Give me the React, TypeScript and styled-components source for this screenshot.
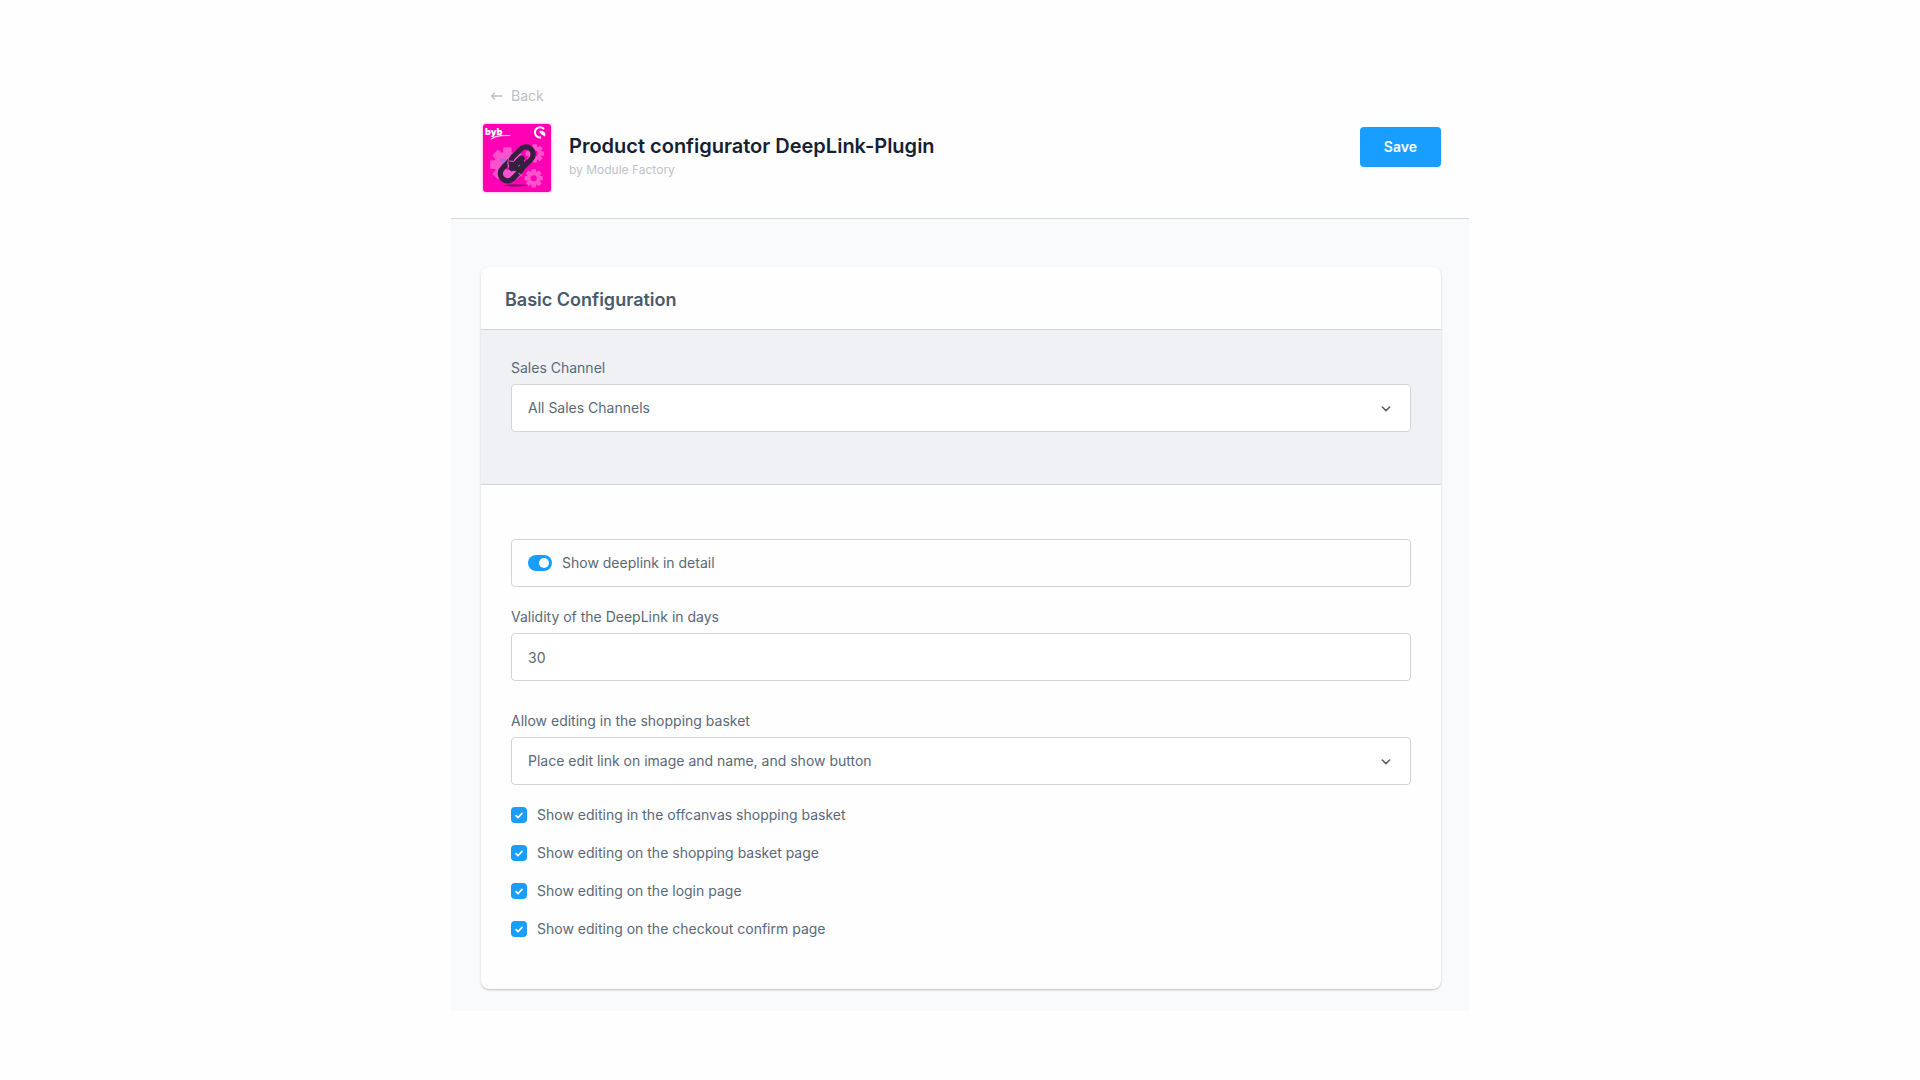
import React from "react";
import styled, { createGlobalStyle } from "styled-components";

const GlobalStyle = createGlobalStyle`
  *, *::before, *::after { box-sizing: border-box; }
  body {
    margin: 0;
    background: #fefefe;
    color: #5a6978;
    font: 400 14px/20px Inter, "Liberation Sans", sans-serif;
  }
`;

const Page = styled.div`
  max-width: 1018px;
  margin: 0 auto;
  padding-top: 84px;
`;

const Header = styled.header`
  padding: 0 28px 26px 32px;
  border-bottom: 1px solid #d1d9e0;
`;

const BackLink = styled.a`
  display: inline-flex;
  align-items: center;
  gap: 8px;
  padding-left: 7px;
  line-height: 24px;
  color: #b9c2cc;
  text-decoration: none;
  svg { display: block; }
`;

const HeaderRow = styled.div`
  display: flex;
  align-items: flex-start;
  margin-top: 16px;
`;

const PluginIcon = styled.svg`
  display: block;
  flex: none;
  width: 68px;
  height: 68px;
  border-radius: 3px;
  box-shadow: 0 0 3px rgba(255, 0, 180, 0.45);
`;

const Heading = styled.div`
  flex: 1;
  padding: 8px 0 0 18px;
`;

const Title = styled.h1`
  margin: 0;
  color: #142233;
  font-size: 20px;
  line-height: 28px;
  font-weight: 600;
`;

const Author = styled.p`
  margin: 0;
  color: #bcc3cb;
  font-size: 12px;
  line-height: 20px;
`;

const SaveButton = styled.button`
  height: 40px;
  margin-top: 3px;
  padding: 0 24px;
  border: 0;
  border-radius: 4px;
  background: #189eff;
  color: #fff;
  font: inherit;
  font-weight: 600;
  cursor: pointer;
`;

const Content = styled.main`
  padding: 48px 28px 22px 30px;
  background: #f9fafc;
`;

const Card = styled.section`
  overflow: hidden;
  border-radius: 8px;
  background: #fefefe;
  box-shadow: 0 1px 1px rgba(0, 0, 0, 0.12), 0 1px 3px rgba(0, 0, 0, 0.12);
`;

const CardTitle = styled.h2`
  margin: 0;
  padding: 21px 24px 17px;
  color: #485a6c;
  font-size: 18px;
  line-height: 24px;
  font-weight: 600;
`;

const ChannelArea = styled.div`
  padding: 28px 30px 52px;
  border: solid #d1d5da;
  border-width: 1px 0;
  background: #f0f1f5;
`;

const Form = styled.form`
  display: flex;
  flex-direction: column;
  padding: 54px 30px 50px;
`;

const Field = styled.div<{ $gap?: number }>`
  margin-top: ${(p) => p.$gap ?? 0}px;
`;

const Label = styled.label`
  display: block;
  margin-bottom: 6px;
`;

const Input = styled.input`
  display: block;
  width: 100%;
  height: 48px;
  padding: 0 16px;
  border: 1px solid #d1d5da;
  border-radius: 4px;
  outline: none;
  background: #fff;
  color: inherit;
  font: inherit;
`;

const SelectWrap = styled.div`
  display: grid;
  align-items: center;
  > * { grid-area: 1 / 1; }
  svg {
    justify-self: end;
    margin: 2px 20px 0 0;
    pointer-events: none;
  }
`;

const SelectBox = styled.select`
  appearance: none;
  width: 100%;
  height: 48px;
  padding: 0 48px 0 16px;
  border: 1px solid #d1d5da;
  border-radius: 4px;
  outline: none;
  background: #fff;
  color: inherit;
  font: inherit;
`;

const SwitchField = styled.label`
  display: flex;
  align-items: center;
  gap: 10px;
  height: 48px;
  padding: 0 16px;
  border: 1px solid #d1d5da;
  border-radius: 4px;
`;

const Switch = styled.input`
  appearance: none;
  display: flex;
  width: 24px;
  height: 16px;
  margin: 0;
  padding: 3px;
  border-radius: 8px;
  background: #b3bfcc;
  &::before {
    content: "";
    width: 10px;
    height: 10px;
    border-radius: 50%;
    background: #fff;
  }
  &:checked {
    justify-content: flex-end;
    background: #189eff;
  }
`;

const CheckList = styled.div`
  display: flex;
  flex-direction: column;
  gap: 18px;
  margin-top: 20px;
`;

const CheckRow = styled.label`
  display: flex;
  align-items: center;
  gap: 10px;
`;

const CheckMark = styled.span`
  display: grid;
  place-items: center;
  > * { grid-area: 1 / 1; }
  svg { pointer-events: none; }
`;

const CheckBox = styled.input`
  appearance: none;
  width: 16px;
  height: 16px;
  margin: 0;
  border-radius: 4px;
  background: #d1d9e0;
  &:checked { background: #189eff; }
`;

function Select({ id, value }: { id: string; value: string }) {
  return (
    <SelectWrap>
      <SelectBox id={id}>
        <option>{value}</option>
      </SelectBox>
      <svg width="10" height="6" viewBox="0 0 10 6" fill="none" stroke="#5b6470" strokeWidth="1.6" strokeLinecap="round" strokeLinejoin="round">
        <path d="M1.3 1 5 4.6 8.7 1" />
      </svg>
    </SelectWrap>
  );
}

function Gear({ x, y, r, hole }: { x: number; y: number; r: number; hole: number }) {
  const tooth = r * 0.5;
  return (
    <g transform={`translate(${x} ${y})`}>
      <circle r={(r * 0.76 + hole) / 2} fill="none" stroke="#ff52cc" strokeWidth={r * 0.76 - hole} />
      {[0, 45, 90, 135, 180, 225, 270, 315].map((a) => (
        <rect key={a} x={-tooth / 2} y={-r} width={tooth} height={r * 0.36} rx={r * 0.08} fill="#ff52cc" transform={`rotate(${a})`} />
      ))}
    </g>
  );
}

function DeepLinkIcon() {
  return (
    <PluginIcon viewBox="0 0 67 67" role="img" aria-label="DeepLink plugin">
      <rect width="67" height="67" fill="#ff00b4" />
      <Gear x={24} y={40} r={17} hole={5} />
      <Gear x={51} y={29} r={9} hole={3} />
      <Gear x={50} y={53.5} r={9} hole={3} />
      <path d="M15 34h9l3 3-7 3z" fill="#b568dc" />
      <ellipse cx="32" cy="60.500" rx="12" ry="1" fill="#74104f" />
      <g fill="none" stroke="#35203f" strokeWidth="5.200">
        <rect x="-12.500" y="-7.200" width="25" height="14.400" rx="7.200" transform="translate(28 45) rotate(-45)" />
        <path d="M33.500 29.500 29 34a7 7 0 0 0 0 9" stroke="#ff52cc" strokeWidth="7" />
        <rect x="-12.500" y="-7.200" width="25" height="14.400" rx="7.200" transform="translate(38.500 33.500) rotate(-45)" />
        <path d="m28.500 43.500 9.500-9.500" strokeWidth="6" strokeLinecap="round" />
      </g>
      <path d="m35 48.500 3.500 3M25.500 36.500l5 .5" stroke="#e85bc2" strokeWidth="1" />
      <text x="2" y="11" fill="#fff" fontFamily="Inter, sans-serif" fontSize="9" fontWeight="900">byb</text>
      <path d="M8 15c3-3 9-4.500 19-3.500-9-.3-14 .7-19 3.500z" fill="#fff" stroke="#fff" strokeWidth=".5" />
      <path d="M60 5A5 5 0 0 0 51.200 8.300A5 5 0 0 0 57.300 13.200" fill="none" stroke="#fff" strokeWidth="2" />
      <path d="M55.500 6.800c3-.6 6 .8 6 3.600 0 .8-.3 1.500-.8 2-.9-2-4.800-2.200-5.200-5.600z" fill="#fff" />
    </PluginIcon>
  );
}

const editingOptions = [
  "Show editing in the offcanvas shopping basket",
  "Show editing on the shopping basket page",
  "Show editing on the login page",
  "Show editing on the checkout confirm page",
];

export default function App() {
  return (
    <>
      <GlobalStyle />
      <Page>
        <Header>
          <BackLink href="#back">
            <svg width="13" height="10" viewBox="0 0 13 10" fill="none" stroke="currentColor" strokeWidth="1.3" strokeLinecap="round" strokeLinejoin="round">
              <path d="M12 5H1.500M4.500 2l-3 3 3 3" />
            </svg>
            Back
          </BackLink>
          <HeaderRow>
            <DeepLinkIcon />
            <Heading>
              <Title>Product configurator DeepLink-Plugin</Title>
              <Author>by Module Factory</Author>
            </Heading>
            <SaveButton type="submit" form="configuration">Save</SaveButton>
          </HeaderRow>
        </Header>
        <Content>
          <Card>
            <CardTitle>Basic Configuration</CardTitle>
            <ChannelArea>
              <Label htmlFor="channel">Sales Channel</Label>
              <Select id="channel" value="All Sales Channels" />
            </ChannelArea>
            <Form id="configuration" onSubmit={(e) => e.preventDefault()}>
              <SwitchField>
                <Switch type="checkbox" role="switch" defaultChecked />
                Show deeplink in detail
              </SwitchField>
              <Field $gap={20}>
                <Label htmlFor="validity">Validity of the DeepLink in days</Label>
                <Input id="validity" type="text" inputMode="numeric" defaultValue="30" />
              </Field>
              <Field $gap={30}>
                <Label htmlFor="editing">Allow editing in the shopping basket</Label>
                <Select id="editing" value="Place edit link on image and name, and show button" />
              </Field>
              <CheckList>
                {editingOptions.map((text) => (
                  <CheckRow key={text}>
                    <CheckMark>
                      <CheckBox type="checkbox" defaultChecked />
                      <svg width="8" height="7" viewBox="0 0 8 7" fill="none" stroke="#fff" strokeWidth="1.6" strokeLinecap="round" strokeLinejoin="round">
                        <path d="m1 3.600 2 2L7 1.400" />
                      </svg>
                    </CheckMark>
                    {text}
                  </CheckRow>
                ))}
              </CheckList>
            </Form>
          </Card>
        </Content>
      </Page>
    </>
  );
}
